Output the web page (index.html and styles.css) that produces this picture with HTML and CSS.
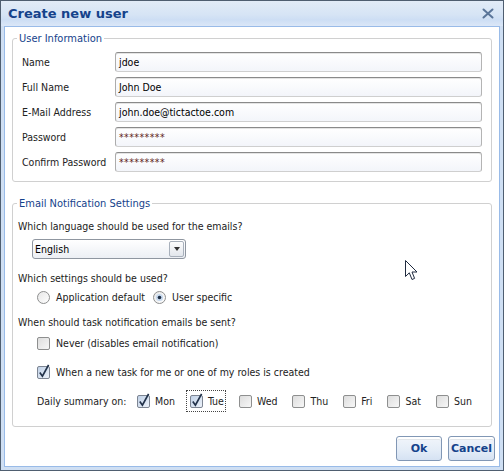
FILE: index.html
```html
<!DOCTYPE html>
<html>
<head>
<meta charset="utf-8">
<title>Create new user</title>
<link rel="stylesheet" href="styles.css">
</head>
<body>
<div class="window">
  <div class="titlebar">
    <span class="title">Create new user</span>
    <svg class="close" width="12" height="11" viewBox="0 0 12 11"><path d="M1.5 1.5 L10.5 9.5 M10.5 1.5 L1.5 9.5" stroke="#5a7599" stroke-width="2" stroke-linecap="round"/></svg>
  </div>
  <div class="body">
    <fieldset class="fs fs-user">
      <legend>User Information</legend>
      <div class="row"><span class="lbl">Name</span><div class="input">jdoe</div></div>
      <div class="row"><span class="lbl">Full Name</span><div class="input">John Doe</div></div>
      <div class="row"><span class="lbl">E-Mail Address</span><div class="input">john.doe@tictactoe.com</div></div>
      <div class="row"><span class="lbl">Password</span><div class="input pw">*********</div></div>
      <div class="row"><span class="lbl">Confirm Password</span><div class="input pw">*********</div></div>
    </fieldset>

    <fieldset class="fs fs-mail">
      <legend>Email Notification Settings</legend>
      <div class="q q1">Which language should be used for the emails?</div>
      <div class="select">
        <span class="sel-text">English</span>
        <span class="sel-btn"><svg width="6" height="4" viewBox="0 0 6 4"><path d="M0 0 H6 L3 4 Z" fill="#333"/></svg></span>
      </div>
      <div class="q q2">Which settings should be used?</div>
      <div class="opt-row radios">
        <span class="opt">
          <svg class="radio" width="13" height="13" viewBox="0 0 13 13"><defs><linearGradient id="rg" x1="0" y1="0" x2="1" y2="1"><stop offset="0" stop-color="#e6e6e6"/><stop offset="1" stop-color="#ffffff"/></linearGradient></defs><circle cx="6.5" cy="6.5" r="6" fill="url(#rg)" stroke="#8e8f8f"/></svg>
          <span>Application default</span>
        </span>
        <span class="opt">
          <svg class="radio" width="13" height="13" viewBox="0 0 13 13"><circle cx="6.5" cy="6.5" r="6" fill="url(#rg)" stroke="#8e8f8f"/><circle cx="6.5" cy="6.5" r="3.6" fill="#c7d9ee"/><circle cx="6.5" cy="6.5" r="1.8" fill="#1d2d44"/></svg>
          <span>User specific</span>
        </span>
      </div>
      <div class="q q3">When should task notification emails be sent?</div>
      <div class="opt-row chk-never">
        <span class="opt">
          <svg class="cb" width="13" height="13" viewBox="0 0 13 13"><defs><linearGradient id="cg" x1="0" y1="0" x2="1" y2="1"><stop offset="0" stop-color="#dcdcdc"/><stop offset="1" stop-color="#f8f8f8"/></linearGradient></defs><rect x="0.5" y="0.5" width="12" height="12" rx="1.5" fill="url(#cg)" stroke="#8e8f8f"/></svg>
          <span>Never (disables email notification)</span>
        </span>
      </div>
      <div class="opt-row chk-new">
        <span class="opt">
          <svg class="cb" width="13" height="13" viewBox="0 0 13 13"><defs><linearGradient id="cgc" x1="0" y1="0" x2="1" y2="1"><stop offset="0" stop-color="#bfd0e6"/><stop offset="1" stop-color="#eef3fa"/></linearGradient></defs><rect x="0.5" y="0.5" width="12" height="12" rx="1.5" fill="url(#cgc)" stroke="#7d8592"/><path d="M2.8 6.6 L5.4 10.2 L11.6 -1.2" fill="none" stroke="#22324a" stroke-width="1.7"/></svg>
          <span>When a new task for me or one of my roles is created</span>
        </span>
      </div>
      <div class="opt-row daily">
        <span class="daily-lbl">Daily summary on:</span>
        <span class="day">
          <svg class="cb" width="13" height="13" viewBox="0 0 13 13"><rect x="0.5" y="0.5" width="12" height="12" rx="1.5" fill="url(#cgc)" stroke="#7d8592"/><path d="M2.8 6.6 L5.4 10.2 L11.6 -1.2" fill="none" stroke="#22324a" stroke-width="1.7"/></svg>
          <span>Mon</span>
        </span>
        <span class="day focus">
          <svg class="cb" width="13" height="13" viewBox="0 0 13 13"><rect x="0.5" y="0.5" width="12" height="12" rx="1.5" fill="url(#cgc)" stroke="#7d8592"/><path d="M2.8 6.6 L5.4 10.2 L11.6 -1.2" fill="none" stroke="#22324a" stroke-width="1.7"/></svg>
          <span>Tue</span>
        </span>
        <span class="day">
          <svg class="cb" width="13" height="13" viewBox="0 0 13 13"><rect x="0.5" y="0.5" width="12" height="12" rx="1.5" fill="url(#cg)" stroke="#8e8f8f"/></svg>
          <span>Wed</span>
        </span>
        <span class="day">
          <svg class="cb" width="13" height="13" viewBox="0 0 13 13"><rect x="0.5" y="0.5" width="12" height="12" rx="1.5" fill="url(#cg)" stroke="#8e8f8f"/></svg>
          <span>Thu</span>
        </span>
        <span class="day">
          <svg class="cb" width="13" height="13" viewBox="0 0 13 13"><rect x="0.5" y="0.5" width="12" height="12" rx="1.5" fill="url(#cg)" stroke="#8e8f8f"/></svg>
          <span>Fri</span>
        </span>
        <span class="day">
          <svg class="cb" width="13" height="13" viewBox="0 0 13 13"><rect x="0.5" y="0.5" width="12" height="12" rx="1.5" fill="url(#cg)" stroke="#8e8f8f"/></svg>
          <span>Sat</span>
        </span>
        <span class="day">
          <svg class="cb" width="13" height="13" viewBox="0 0 13 13"><rect x="0.5" y="0.5" width="12" height="12" rx="1.5" fill="url(#cg)" stroke="#8e8f8f"/></svg>
          <span>Sun</span>
        </span>
      </div>
    </fieldset>

    <div class="buttons">
      <button class="btn btn-ok">Ok</button>
      <button class="btn btn-cancel">Cancel</button>
    </div>
  </div>
  <svg class="cursor" width="14" height="21" viewBox="0 0 14 21"><path d="M0.5 0.5 L0.5 16.5 L4.3 12.8 L7 19.5 L9.6 18.4 L7 12 L12 12 Z" fill="#ffffff" stroke="#1f2a3f" stroke-width="1" stroke-linejoin="round"/></svg>
</div>
</body>
</html>
```

FILE: styles.css
```css
html, body {
  margin: 0;
  padding: 0;
  background: #ffffff;
}

.window {
  position: relative;
  width: 504px;
  height: 471px;
  box-sizing: border-box;
  border: 1px solid #4f5e70;
  background: #cfdff3;
  display: flex;
  flex-direction: column;
  font-family: "DejaVu Sans Condensed", "DejaVu Sans", sans-serif;
  font-size: 10.5px;
  color: #222;
}

.titlebar {
  height: 25px;
  flex: none;
  display: flex;
  align-items: center;
  justify-content: space-between;
  padding: 0 9px 0 7px;
  background: linear-gradient(#e2ebf7 0%, #d6e4f5 55%, #cddef4 75%, #dbe7f7 100%);
}

.title {
  font-family: "DejaVu Sans", sans-serif;
  font-weight: bold;
  font-size: 13px;
  color: #15428b;
}

.close {
  display: block;
}

.body {
  flex: 1;
  margin: 0 3px 3px 3px;
  border: 1px solid #99bbe8;
  background: #ffffff;
  display: flex;
  flex-direction: column;
}

.fs {
  border: 1px solid #d0d0d0;
  border-radius: 3px;
  margin: 5px 7px 0 7px;
  min-width: 0;
}

.fs legend {
  font-size: 11px;
  line-height: 13px;
  color: #15428b;
  padding: 0 2px;
}

.fs-user {
  padding: 7px 9px 9px 9px;
}

.fs-user legend {
  margin-left: -5px;
}

.row {
  display: flex;
  align-items: center;
  height: 20px;
  margin-bottom: 5px;
}

.row:last-child {
  margin-bottom: 0;
}

.lbl {
  width: 93px;
  flex: none;
  color: #222;
}

.input {
  flex: 1;
  height: 20px;
  box-sizing: border-box;
  border: 1px solid;
  border-color: #8a8a8a #b4b4b4 #cfcfcf #acacac;
  border-radius: 3px;
  background: linear-gradient(#ffffff, #f3f5fa);
  box-shadow: inset 0 1px 0 #e4e4e4;
  padding: 0 3px;
  line-height: 18px;
  color: #000;
}

.input.pw {
  color: #5e2416;
  letter-spacing: 0.4px;
}

.fs-mail {
  margin-top: 15px;
  padding: 9px 5px 14px 5px;
}

.fs-mail legend {
  margin-left: -1px;
}

.q {
  line-height: 14px;
  height: 14px;
}

.select {
  margin: 6px 0 0 14px;
  width: 154px;
  height: 20px;
  box-sizing: border-box;
  border: 1px solid #8f96a0;
  border-radius: 3px;
  background: linear-gradient(#ffffff, #eceff4);
  display: flex;
  align-items: center;
  justify-content: space-between;
  padding: 0 1px 0 2px;
}

.sel-text {
  color: #000;
}

.sel-btn {
  width: 15px;
  height: 16px;
  box-sizing: border-box;
  border: 1px solid #a8b0bb;
  border-radius: 2px;
  background: linear-gradient(#fdfdfd, #e2e6ec);
  display: flex;
  align-items: center;
  justify-content: center;
}

.q2 { margin-top: 12px; }
.q3 { margin-top: 11px; }

.opt-row {
  display: flex;
  align-items: center;
  height: 14px;
  margin-left: 19px;
}

.radios { margin-top: 5px; }
.chk-never { margin-top: 7px; }
.chk-new { margin-top: 15px; }

.opt {
  display: inline-flex;
  align-items: center;
  gap: 6px;
  margin-right: 8px;
}

.radio, .cb {
  display: block;
  flex: none;
  overflow: visible;
}

.daily {
  margin-top: 11px;
  height: 22px;
}

.daily-lbl {
  width: 96px;
  flex: none;
}

.day {
  display: inline-flex;
  align-items: center;
  gap: 5px;
  height: 22px;
  box-sizing: border-box;
  padding: 0 1px 0 3px;
  border: 1px dotted transparent;
  margin-right: 9px;
}

.day.focus {
  border-color: #444;
}

.buttons {
  display: flex;
  justify-content: flex-end;
  gap: 6px;
  margin: 9px 4px 0 0;
}

.btn {
  height: 25px;
  box-sizing: border-box;
  border: 1px solid #8197b5;
  border-radius: 3px;
  background: linear-gradient(#f7f9fc 0%, #eef3fa 15%, #e3ecf7 60%, #d5e2f3 100%);
  box-shadow: inset 0 2px 0 #ffffff, inset 0 3px 0 #e2e6ea;
  font-family: "DejaVu Sans", sans-serif;
  font-weight: bold;
  font-size: 11px;
  color: #15428b;
  padding: 0;
}

.btn-ok { width: 46px; }
.btn-cancel { width: 47px; }

.cursor {
  position: absolute;
  left: 404px;
  top: 259px;
}
```
